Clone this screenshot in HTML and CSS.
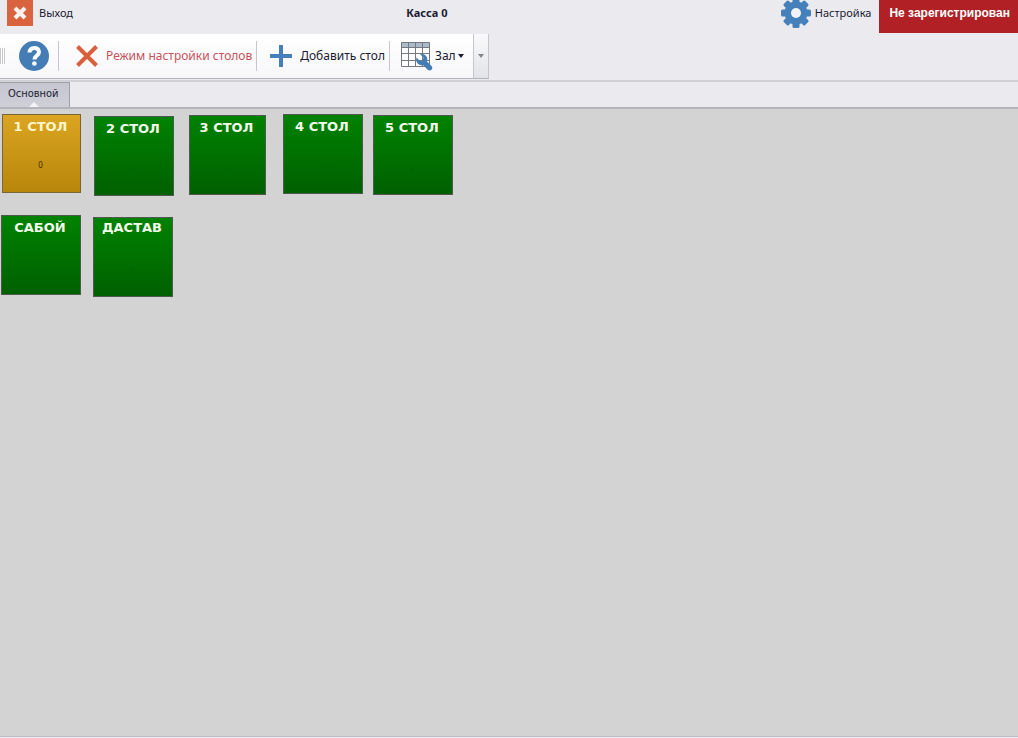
FILE: index.html
```html
<!DOCTYPE html>
<html lang="ru">
<head>
<meta charset="utf-8">
<title>Касса 0</title>
<link rel="stylesheet" href="styles.css">
</head>
<body>
<header class="header">
  <button class="exit" type="button">
    <svg class="exit-icon" viewBox="0 0 26 26" aria-hidden="true"><path fill="#d9633f" d="M0 0h26v26H0z"/><path d="M8 8l10 10M18 8L8 18" stroke="#fbf1ee" stroke-width="4"/></svg>
    <span>Выход</span>
  </button>
  <h1 class="title">Касса 0</h1>
  <button class="settings" type="button">
    <svg class="settings-icon" viewBox="0 0 30 30" aria-hidden="true">
      <g fill="#4580ba">
        <rect id="tooth" x="11.500" y="0" width="7" height="30" rx="1.500"/>
        <use href="#tooth" transform="rotate(45 15 15)"/>
        <use href="#tooth" transform="rotate(90 15 15)"/>
        <use href="#tooth" transform="rotate(135 15 15)"/>
        <circle cx="15" cy="15" r="11.500"/>
      </g>
      <circle cx="15" cy="15" r="5" fill="#f2f3f7"/>
    </svg>
    <span>Настройка</span>
  </button>
  <div class="status">Не зарегистрирован</div>
</header>

<div class="toolbar" role="toolbar" aria-label="Столы">
  <span class="grip"></span>
  <button class="tool help" type="button" aria-label="Справка">
    <svg class="help-icon" viewBox="0 0 30 30" aria-hidden="true"><circle cx="15" cy="15" r="15" fill="#447db6"/><path d="M10.500 11.500C10.500 5.500 20 5.500 20 11c0 3.500-4.500 3.500-4.500 7.500" fill="none" stroke="#fff" stroke-width="4"/><circle cx="15.400" cy="22.500" r="2.300" fill="#fff"/></svg>
  </button>
  <span class="separator"></span>
  <button class="tool mode" type="button">
    <svg class="mode-icon" viewBox="0 0 22 22" aria-hidden="true"><path d="M1.500 1.500l19 19M20.500 1.500l-19 19" stroke="#d9603c" stroke-width="4"/></svg>
    <span>Режим настройки столов</span>
  </button>
  <span class="separator"></span>
  <button class="tool add" type="button">
    <svg class="add-icon" viewBox="0 0 22 22" aria-hidden="true"><path d="M11 0v22M0 11h22" stroke="#4580ba" stroke-width="4"/></svg>
    <span>Добавить стол</span>
  </button>
  <span class="separator"></span>
  <button class="tool hall" type="button">
    <svg class="hall-icon" viewBox="0 0 32 30" aria-hidden="true">
      <path fill="#fff" d="M.5 1.500h28v24H.5z"/><path fill="#a9bac8" d="M.5 1.500h28v5H.5z"/>
      <path d="M.5 1.500h28v24H.5zM.5 6.500h28M.5 12.500h28M.5 19.500h28M7.500 1.500v24M14.500 1.500v24M21.500 1.500v24" fill="none" stroke="#75797f"/>
      <path d="M19 13l3.500 3.500-.8 2.700-2.700.8-3.500-3.500c-1.500 5 2.500 8.500 6.500 7.500l5 5c3.500 1.500 5-1.500 4-3.500l-5-5c1.500-4.500-2.500-8.500-7-7.500z" fill="#447db6"/>
    </svg>
    <span>Зал</span>
    <span class="caret"></span>
  </button>
  <button class="overflow" type="button" aria-label="Параметры панели"><span class="caret caret-muted"></span></button>
</div>

<nav class="tabs" role="tablist">
  <button class="tab" type="button" role="tab" aria-selected="true">Основной</button>
</nav>

<main class="floor">
  <button class="table table-1 busy" type="button"><span class="name">1 СТОЛ</span><span class="count">0</span></button>
  <button class="table table-2" type="button"><span class="name">2 СТОЛ</span><span class="count">.</span></button>
  <button class="table table-3" type="button"><span class="name">3 СТОЛ</span><span class="count">.</span></button>
  <button class="table table-4" type="button"><span class="name">4 СТОЛ</span><span class="count">.</span></button>
  <button class="table table-5" type="button"><span class="name">5 СТОЛ</span><span class="count">.</span></button>
  <button class="table takeaway" type="button"><span class="name">САБОЙ</span><span class="count">.</span></button>
  <button class="table delivery" type="button"><span class="name">ДАСТАВ</span><span class="count">.</span></button>
</main>
</body>
</html>
```
FILE: styles.css
```css
* {
  box-sizing: border-box;
}

body {
  display: flex;
  flex-direction: column;
  min-height: 100vh;
  margin: 0;
  background: #ebebef;
  color: #1b1b32;
  font: 11px/16px "Noto Sans", "Open Sans", sans-serif;
}

button {
  padding: 0;
  border: 0;
  background: none;
  color: inherit;
  font: inherit;
}

svg {
  display: block;
  flex: none;
}

.header {
  display: flex;
  align-items: flex-start;
  height: 34px;
}

.exit,
.settings {
  display: flex;
  align-items: center;
  height: 26px;
}

.exit {
  gap: 6px;
  margin-left: 7px;
}

.exit-icon {
  width: 26px;
  height: 26px;
}

.title {
  flex: 1;
  margin: 0;
  font-size: 11px;
  line-height: 26px;
  text-align: center;
}

.settings {
  gap: 4px;
  margin-right: 8px;
}

.settings-icon {
  width: 30px;
  height: 30px;
}

.status {
  height: 33px;
  padding: 0 8px 0 10px;
  background: #b02024;
  color: #fff;
  font: bold 12px/26px "Liberation Sans", sans-serif;
}

.toolbar {
  display: flex;
  align-items: center;
  align-self: flex-start;
  height: 45px;
  border-bottom: 1px solid #b2b2ba;
  background: linear-gradient(#fff, #f7f7fa);
  font-size: 12px;
}

.tool {
  display: flex;
  align-items: center;
}

.grip {
  width: 5px;
  height: 16px;
  background: repeating-linear-gradient(90deg, #c8c8ce 0 1px, #fff 1px 2px);
}

.separator {
  width: 1px;
  height: 30px;
  background: #c6c6cc;
}

.help {
  padding: 0 9px 0 14px;
}

.help-icon {
  width: 30px;
  height: 30px;
}

.mode {
  gap: 8px;
  padding: 0 4px 0 17px;
  color: #c9515a;
}

.mode-icon {
  width: 22px;
  height: 22px;
}

.add {
  gap: 8px;
  padding: 0 4px 0 13px;
}

.add-icon {
  width: 22px;
  height: 22px;
}

.hall {
  gap: 2px;
  padding: 0 9px 0 11px;
}

.hall-icon {
  width: 32px;
  height: 30px;
}

.caret {
  border: 3px solid transparent;
  border-top: 4px solid #1b1b32;
  border-bottom: 0;
}

.caret-muted {
  border-top-color: #85858c;
}

.overflow {
  display: flex;
  align-items: center;
  justify-content: center;
  align-self: stretch;
  width: 16px;
  border: solid #c6c6cc;
  border-width: 0 1px;
  background: linear-gradient(#fafafc, #e2e3e8);
}

.tabs {
  display: flex;
  height: 29px;
  border-top: 2px solid #cfcfd5;
  border-bottom: 2px solid #b4b4bc;
  margin-top: 1px;
}

.tab {
  position: relative;
  padding: 0 10px 2px 8px;
  border: solid #a0a0a8;
  border-width: 1px 1px 0 0;
  background: linear-gradient(#c6c6d0, #cfcfd8);
  font-family: "DejaVu Sans Condensed", "DejaVu Sans", sans-serif;
}

.tab::after {
  content: "";
  position: absolute;
  bottom: 0;
  left: 50%;
  margin-left: -5px;
  border: 5px solid transparent;
  border-top: 0;
  border-bottom-color: #f4f4f7;
}

.floor {
  position: relative;
  flex: 1;
  min-height: 200px;
  border-bottom: 1px solid #bdbdca;
  margin-bottom: 1px;
  background: #d3d3d3;
}

.table {
  position: absolute;
  display: flex;
  flex-direction: column;
  align-items: center;
  gap: 20px;
  width: 80px;
  height: 80px;
  padding: 2px 2px 0 0;
  border: 1px solid #4e5a4e;
  background: linear-gradient(#008200, #006000);
}

.name {
  color: #f4fbec;
  font: bold 13px/20px "DejaVu Sans", sans-serif;
}

.count {
  color: #064d06;
  font-size: 8px;
}

.busy {
  border-color: #77663c;
  background: linear-gradient(#dba520, #b8860b);
}

.busy .name {
  color: #fff5cc;
}

.busy .count {
  color: #3d2c04;
}

.table-1 {
  top: 5px;
  left: 2px;
  width: 79px;
  height: 79px;
}

.table-2 {
  top: 7px;
  left: 94px;
}

.table-3 {
  top: 6px;
  left: 189px;
  width: 77px;
}

.table-4 {
  top: 5px;
  left: 283px;
}

.table-5 {
  top: 6px;
  left: 373px;
}

.takeaway {
  top: 106px;
  left: 1px;
}

.delivery {
  top: 108px;
  left: 93px;
  padding-top: 0;
}
```
